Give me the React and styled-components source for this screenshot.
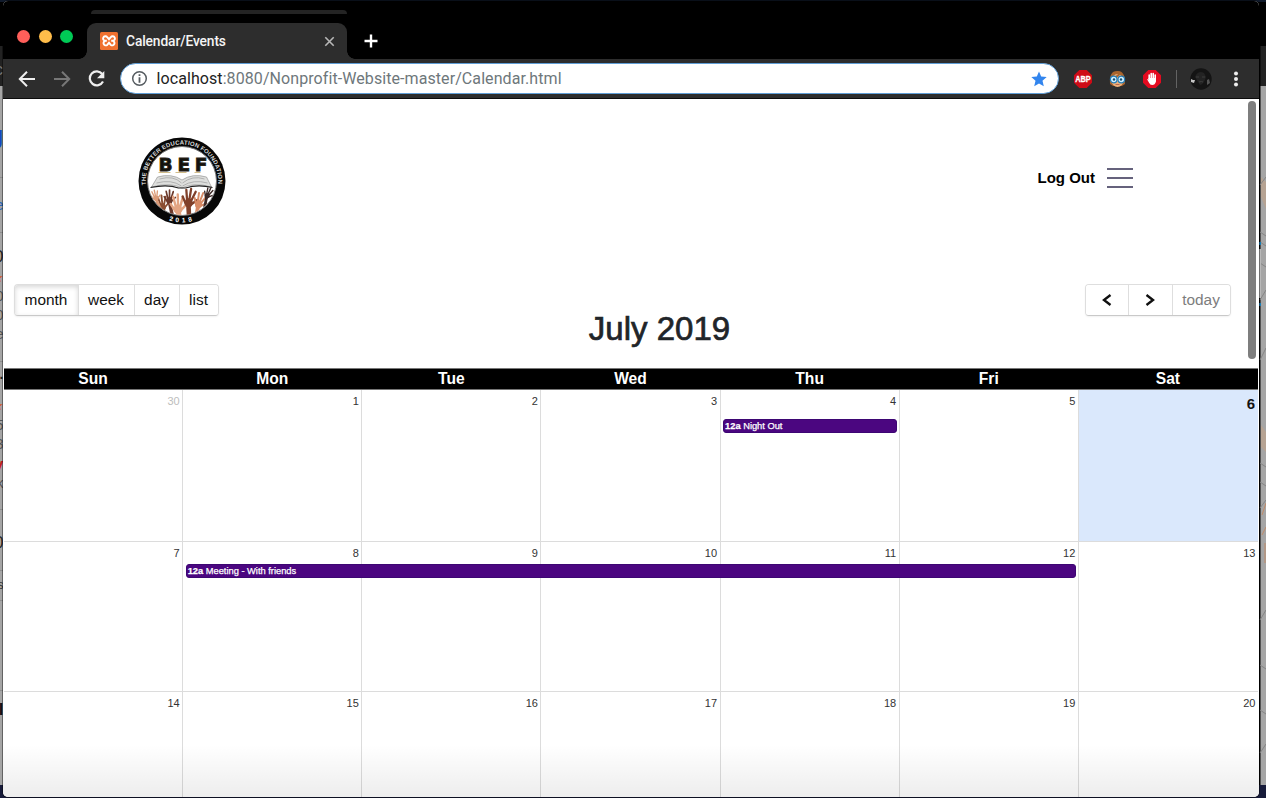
import React from "react";
import styled, { createGlobalStyle } from "styled-components";

const Global = createGlobalStyle`
  * { box-sizing: border-box; }
  html, body { margin: 0; padding: 0; overflow: hidden; }
  body { font-family: "Liberation Sans", Arial, sans-serif; background: #000; }
  h2 { margin: 0; }
`;

const Desktop = styled.div`
  position: relative;
  width: 1266px;
  height: 798px;
  overflow: hidden;
  padding: 1px 7px 1px 3px;
  background: linear-gradient(#101a2b 0 2px, #000 2px 46px, #222 46px 86px, #a5a5a5 86px 785px, #171b3a 785px);
`;

const Backdrop = styled.svg`
  position: absolute;
  top: 0;
  left: 0;
`;

const Window = styled.div`
  position: relative;
  display: flex;
  flex-direction: column;
  width: 1256px;
  height: 796px;
  background: #fff;
  border-radius: 5px;
  overflow: hidden;
  box-shadow: 0 0 0 1px rgba(0, 0, 0, 0.4);
`;

const TabStrip = styled.div`
  flex: none;
  display: flex;
  align-items: flex-end;
  height: 58px;
  background: #000;
`;

const Lights = styled.div`
  display: flex;
  gap: 8.5px;
  width: 84px;
  height: 36px;
  padding: 7px 0 0 14.3px;
`;

const Light = styled.span`
  width: 13px;
  height: 13px;
  border-radius: 50%;
  background: ${(p) => p.$color};
`;

const TabColumn = styled.div`
  display: flex;
  flex-direction: column;
  width: 260px;
`;

const TabGhost = styled.div`
  height: 4px;
  margin: 0 0 9px 4px;
  width: 256px;
  background: #242424;
  border-radius: 8px 8px 0 0;
`;

const Tab = styled.div`
  position: relative;
  display: flex;
  align-items: center;
  height: 36px;
  padding: 0 11px 0 13px;
  background: #2d2d2d;
  border-radius: 9px 9px 0 0;
  &::before, &::after {
    content: "";
    position: absolute;
    bottom: 0;
    width: 8px;
    height: 8px;
  }
  &::before { left: -8px; background: radial-gradient(circle at 0 0, transparent 7.5px, #2d2d2d 8px); }
  &::after { right: -8px; background: radial-gradient(circle at 100% 0, transparent 7.5px, #2d2d2d 8px); }
`;

const TabTitle = styled.span`
  flex: 1;
  margin-left: 8px;
  padding-bottom: 1px;
  font: 500 13.8px/18px Roboto, sans-serif;
  letter-spacing: -0.12px;
  color: #f4f4f4;
`;

const NewTab = styled.div`
  display: flex;
  align-items: center;
  height: 36px;
  padding-left: 16.500px;
`;

const Toolbar = styled.div`
  flex: none;
  display: flex;
  align-items: center;
  height: 40px;
  background: #2d2d2d;
  border-bottom: 1px solid #0c0c0c;
`;

const NavIcons = styled.div`
  display: flex;
  align-items: center;
  gap: 15px;
  width: 116.500px;
  padding-left: 13.500px;
`;

const Address = styled.div`
  display: flex;
  align-items: center;
  width: 939px;
  height: 31px;
  padding: 0 11px 0 10px;
  background: #fff;
  border: 1.5px solid #609ed6;
  border-radius: 16px;
`;

const Url = styled.span`
  flex: 1;
  margin-left: 9px;
  font: 400 16px/20px Roboto, sans-serif;
  letter-spacing: 0.08px;
  color: #6e777b;
  white-space: nowrap;
`;

const Host = styled.span`
  color: #222;
`;

const Extensions = styled.div`
  display: flex;
  align-items: center;
  padding-left: 15px;
`;

const ExtIcon = styled.svg`
  flex: none;
  display: block;
  margin-right: ${(p) => p.$gap}px;
`;

const Divider = styled.span`
  width: 1px;
  height: 18px;
  margin-right: 13px;
  background: #636363;
`;

const Page = styled.main`
  position: relative;
  flex: 1;
  display: flex;
  flex-direction: column;
  min-height: 0;
  padding: 0 1px;
  background: #fff;
`;

const ScrollThumb = styled.div`
  position: absolute;
  top: 2px;
  right: 3px;
  width: 8px;
  height: 258px;
  border-radius: 4px;
  background: #7e7e7e;
`;

const BottomShade = styled.div`
  position: absolute;
  inset: auto 0 0 0;
  height: 52px;
  background: linear-gradient(rgba(0, 0, 0, 0), rgba(0, 0, 0, 0.07));
`;

const SiteHeader = styled.header`
  flex: none;
  display: flex;
  justify-content: space-between;
  height: 185px;
  padding: 37px 125px 0 133px;
`;

const Account = styled.div`
  display: flex;
  align-items: center;
  height: 83px;
  gap: 12px;
  font-size: 15px;
  font-weight: 700;
  color: #000;
`;

const Menu = styled.div`
  display: flex;
  flex-direction: column;
  justify-content: space-between;
  width: 26px;
  height: 20px;
`;

const MenuLine = styled.span`
  height: 2px;
  background: #65627c;
`;

const Controls = styled.div`
  flex: none;
  display: grid;
  grid-template-columns: 1fr auto 1fr;
  height: 84px;
  padding: 0 27px 0 10px;
`;

const ButtonGroup = styled.div`
  display: flex;
  justify-self: ${(p) => p.$side};
  height: 32px;
  border: 1px solid #dedede;
  border-bottom-color: #c9c9c9;
  border-radius: 4px;
  overflow: hidden;
  box-shadow: 0 1px 2px rgba(0, 0, 0, 0.06);
`;

const Button = styled.button`
  display: flex;
  align-items: center;
  justify-content: center;
  width: ${(p) => p.$width}px;
  height: 30px;
  padding: 0 1px 0 0;
  border: 0;
  border-left: ${(p) => (p.$first ? "0" : "1px solid #dedede")};
  background: #fff;
  color: ${(p) => (p.$muted ? "#7d7d7d" : "#111")};
  font: 400 15.4px "Liberation Sans", Arial, sans-serif;
  box-shadow: ${(p) => (p.$active ? "inset 0 2px 5px rgba(0,0,0,.16)" : "none")};
`;

const Title = styled.h2`
  padding-top: 26px;
  margin-left: 74px;
  font-size: 33px;
  line-height: 38px;
  font-weight: 400;
  color: #212529;
  -webkit-text-stroke: 0.7px #212529;
`;

const WeekdayBar = styled.div`
  flex: none;
  display: grid;
  grid-template-columns: repeat(7, 1fr);
  height: 22px;
  background: #000;
  border: 1px solid #777;
  border-width: 1px 0;
`;

const Weekday = styled.div`
  padding-right: 1px;
  text-align: center;
  font-size: 15.6px;
  line-height: 20px;
  font-weight: 700;
  color: #fff;
`;

const Week = styled.div`
  flex: none;
  display: grid;
  grid-template-columns: repeat(7, minmax(0, 1fr));
  grid-template-rows: ${(p) => p.$offset}px 14px 1fr;
  height: ${(p) => p.$height}px;
  border-bottom: 1px solid #dcdcdc;
`;

const Day = styled.div`
  grid-column: ${(p) => p.$col};
  grid-row: 1 / -1;
  padding: ${(p) => (p.$today ? "5px 3px" : "4px 2.5px")};
  border-right: ${(p) => (p.$col === 7 ? "0" : "1px solid #dcdcdc")};
  background: ${(p) => (p.$today ? "#dae8fc" : "transparent")};
  text-align: right;
  font-size: ${(p) => (p.$today ? 15 : 11)}px;
  line-height: ${(p) => (p.$today ? 18 : 14)}px;
  font-weight: ${(p) => (p.$today ? 700 : 400)};
  color: ${(p) => (p.$other ? "#bdbdbd" : p.$today ? "#111" : "#333")};
`;

const Event = styled.div`
  grid-column: ${(p) => p.$from} / ${(p) => p.$to};
  grid-row: 2;
  margin: 0 3px 0 2.5px;
  padding: 0 1px;
  border-radius: 3px;
  background: #4b0680;
  border: 1px solid #3d0673;
  color: #fff;
  font-size: 9.3px;
  line-height: 12px;
  white-space: nowrap;
  -webkit-text-stroke: 0.25px #fff;
`;

const WEEKDAYS = ["Sun", "Mon", "Tue", "Wed", "Thu", "Fri", "Sat"];
const WEEKS = [
  { days: [30, 1, 2, 3, 4, 5, 6], height: 152, offset: 29, event: { from: 5, to: 6, title: "Night Out" } },
  { days: [7, 8, 9, 10, 11, 12, 13], height: 150, offset: 21.5, event: { from: 2, to: 7, title: "Meeting - With friends" } },
  { days: [14, 15, 16, 17, 18, 19, 20], height: 150, offset: 22 },
];

const LEFT_BITS = [
  ["g", 144, "#1646c4", 26, 700], ["e", 210, "#2867b8", 15, 400], ["0", 262, "#222", 17, 400],
  ["★", 282, "#cf5a24", 13, 400], ["0", 301, "#555", 14, 400], ["0", 320, "#555", 14, 400],
  ["e", 339, "#555", 14, 400], [".", 379, "#222", 14, 700], ["★", 410, "#cf5a24", 13, 400],
  ["5", 430, "#555", 14, 400], ["3", 449, "#555", 14, 400], ["y", 470, "#c62222", 17, 700],
  ["k", 488, "#555", 14, 400], ["0", 548, "#222", 16, 400], ["s", 589, "#333", 12, 400], ["l", 715, "#111", 17, 700],
];

function DesktopBackdrop() {
  return (
    <Backdrop width="1266" height="798">
      <g>
        {LEFT_BITS.map(([ch, y, fill, size, weight]) => (
          <text key={y} x="3.500" y={y} fill={fill} fontSize={size} fontWeight={weight} textAnchor="end">{ch}</text>
        ))}
        <text x="3" y="75" fill="#777" fontSize="17" textAnchor="end">c</text>
        <path d="M0 177.500h3M0 232.500h3M0 361.500h3M0 509.500h3M0 570.500h3M0 600.500h3M0 690.500h3" stroke="#8e8e8e" />
      </g>
      <path d="M1259 46v739" stroke="#000" strokeWidth="3" />
      <path d="M1261 177v20l5 12v-27zM1261 425v22l5 5v-20z" fill="#b6a393" />
      <path d="M1260 185l6-8M1260 232l6 4M1260 242l6 4M1260 263l6 4M1260 300l6-10M1260 360l6-12M1260 463l6 4M1260 482l6 4M1260 508l6-8M1260 620l6-10M1260 665l6 4M1260 710l6 4M1260 753l6-9" stroke="#858585" fill="none" />
      <path d="M1262 515l4-12M1262 535l4-8M1265 543v20" stroke="#c08b69" fill="none" />
      <path d="M1260 249v49" stroke="#b9b9b9" strokeWidth="2" />
      <path d="M1260 242v3M1260 303v3" stroke="#177cb5" strokeWidth="2" />
    </Backdrop>
  );
}

function Logo() {
  const arms = [
    [164, 213, 1.1, -12, "#8b4e32"], [157, 205, 0.8, -18, "#dc9b78"], [171, 207, 1, -6, "#6c392b"], [180, 215, 1.4, -8, "#e3a482"],
    [191, 209, 1.35, 3, "#80402a"], [201, 211, 1.15, 15, "#d78b66"], [209, 203, 0.8, 18, "#3c2825"],
  ];
  return (
    <svg width="90" height="90" viewBox="137.500 136 90 90">
      <defs>
        <path id="ringTop" d="M146.700 186A36.200 36.200 0 1 1 218.300 186" />
        <path id="ringBottom" d="M157 213.700A41.500 41.500 0 0 0 208 213.700" />
        <clipPath id="face"><circle cx="182.500" cy="181" r="34" /></clipPath>
        <g id="hand">
          <path d="M0 16L-1.500 2" stroke="currentColor" strokeWidth="3.400" fill="none" />
          <path d="M-3.500 2L-6-3M-2.500 0L-3.500-8M-1 0L0-9M0 1L3.500-7M0 3L5-1" stroke="currentColor" strokeWidth="1.700" strokeLinecap="round" fill="none" />
          <ellipse cx="-1.300" cy="1.500" rx="3" ry="3.500" fill="currentColor" />
        </g>
      </defs>
      <circle cx="182.500" cy="181" r="43.500" fill="#070707" />
      <circle cx="182.500" cy="181" r="34.500" fill="#fff" stroke="#777" strokeWidth="1" />
      <text fill="#dcdcdc" fontSize="6" fontWeight="700">
        <textPath href="#ringTop" textLength="121" startOffset="1">THE BETTER EDUCATION FOUNDATION</textPath>
      </text>
      <text fill="#fff" fontSize="6.500" fontWeight="700">
        <textPath href="#ringBottom" startOffset="50%" textAnchor="middle" letterSpacing="3">2018</textPath>
      </text>
      <text x="159" y="171" textLength="49" fontSize="18.500" fontWeight="700" fontFamily="DejaVu Sans, sans-serif" fill="#111" stroke="#2b2413" strokeWidth="0.900">BEF</text>
      <path d="M159 172.500h12M176 172.500h11M195 172.500h6" stroke="#bda158" strokeWidth="0.700" />
      <path d="M158 177Q172 173 182.500 180Q193 173 207 177L212 187Q194 182 182.500 188Q171 182 152 187Z" fill="#dedfdd" stroke="#888" strokeWidth="0.600" />
      <path d="M160 179Q174 175 182 183M157 183Q172 179 182 186M205 179Q193 175 183 183M208 183Q194 179 183 186" stroke="#aaa" fill="none" strokeWidth="0.900" />
      <path d="M151 187.500Q168 184 179 188H186Q198 184 213 187.500" stroke="#222" strokeWidth="1.200" fill="none" />
      <g clipPath="url(#face)">
        {arms.map(([x, y, scale, angle, color]) => (
          <use key={x} href="#hand" transform={`translate(${x} ${y - 8}) rotate(${angle}) scale(${scale})`} color={color} />
        ))}
      </g>
    </svg>
  );
}

function BrowserChrome() {
  return (
    <>
      <TabStrip>
        <Lights>
          <Light $color="#ff5f5a" /><Light $color="#ffbd4a" /><Light $color="#00ca56" />
        </Lights>
        <TabColumn>
          <TabGhost />
          <Tab>
            <svg width="18" height="18" viewBox="0 0 18 18">
              <rect width="18" height="18" rx="1.500" fill="#f0712f" />
              <path d="M5.500 8.800A2.300 2.300 0 1 1 7.200 5.100L9 7.200l1.800-2.100A2.300 2.300 0 1 1 12.500 8.800H11.200M5.500 8.800H6.800M5.500 8.800A2.300 2.300 0 1 0 7.200 12.900L9 10.800l1.800 2.100A2.300 2.300 0 1 0 12.500 8.800" fill="none" stroke="#fff" strokeWidth="1.900" />
            </svg>
            <TabTitle>Calendar/Events</TabTitle>
            <svg width="13" height="13" viewBox="0 0 13 13"><path d="M2.300 2.300l8.400 8.400M10.700 2.300l-8.400 8.400" stroke="#b8b8b8" strokeWidth="1.600" /></svg>
          </Tab>
        </TabColumn>
        <NewTab>
          <svg width="14" height="14" viewBox="0 0 14 14"><path d="M7 .5v13M.5 7h13" stroke="#fff" strokeWidth="2.400" /></svg>
        </NewTab>
      </TabStrip>
      <Toolbar>
        <NavIcons>
          <svg width="20" height="20" viewBox="0 0 20 20"><path d="M18 10H3M10 2.800L2.800 10l7.200 7.200" fill="none" stroke="#eee" strokeWidth="2" /></svg>
          <svg width="20" height="20" viewBox="0 0 20 20"><path d="M2 10h15M10 2.800l7.200 7.200-7.200 7.200" fill="none" stroke="#777" strokeWidth="2" /></svg>
          <svg width="19" height="20" viewBox="0 0 19 20"><path d="M15.300 5A7 7 0 1 0 16 12.500" fill="none" stroke="#eee" strokeWidth="2.200" /><path d="M17.300 2v7.300H10z" fill="#eee" /></svg>
        </NavIcons>
        <Address>
          <svg width="17" height="17" viewBox="0 0 17 17"><circle cx="8.500" cy="8.500" r="6.800" fill="none" stroke="#555b60" strokeWidth="1.500" /><path d="M8.500 4.200v1.900M8.500 7.300v5.500" stroke="#555b60" strokeWidth="1.800" /></svg>
          <Url><Host>localhost</Host>:8080/Nonprofit-Website-master/Calendar.html</Url>
          <svg width="16" height="16" viewBox="0 0 16 16"><path d="M8 .5l2.200 5.100 5.500.5-4.200 3.700 1.300 5.500L8 12.400l-4.800 2.900 1.300-5.500L.3 6.100l5.500-.5z" fill="#3285ee" /></svg>
        </Address>
        <Extensions>
          <ExtIcon $gap={17} width="18" height="18" viewBox="0 0 18 18">
            <path d="M5.300 0h7.400L18 5.300v7.400L12.700 18H5.300L0 12.700V5.300z" fill="#cf0b16" />
            <text x="1.200" y="12.200" fontSize="9" fontWeight="700" fill="#fff" stroke="#fff" strokeWidth="0.300" textLength="15.600" lengthAdjust="spacingAndGlyphs">ABP</text>
          </ExtIcon>
          <ExtIcon $gap={17} width="17" height="18" viewBox="0 0 17 18">
            <path d="M1 14Q0 1 8 1Q16 0 16 14L13 16H4z" fill="#a9642c" />
            <ellipse cx="8.500" cy="10.500" rx="6" ry="6.500" fill="#eeb17a" />
            <path d="M2 8Q8 8 11 3Q14 5 15 8" stroke="#a9642c" strokeWidth="2" fill="none" />
            <circle cx="4.700" cy="9.500" r="3.300" fill="#cfefff" stroke="#237eba" strokeWidth="1.200" />
            <circle cx="12.300" cy="9.500" r="3.300" fill="#cfefff" stroke="#237eba" strokeWidth="1.200" />
            <circle cx="5" cy="9.500" r="1.200" fill="#1d506d" /><circle cx="12" cy="9.500" r="1.200" fill="#1d506d" />
            <path d="M6.500 14.500h4" stroke="#b96851" />
          </ExtIcon>
          <ExtIcon $gap={15} width="18" height="18" viewBox="0 0 18 18">
            <path d="M5.300 0h7.400L18 5.300v7.400L12.700 18H5.300L0 12.700V5.300z" fill="#e40b20" />
            <path d="M6.200 9V5M8.200 9V3.500M10.200 9V3.500M12.200 10V5" stroke="#fff" strokeWidth="1.600" strokeLinecap="round" />
            <path d="M5.400 8h7.600v3.500Q12 15 9.200 15Q7 15 5.900 12.500L4.200 9.500Q4.700 8.500 5.700 10z" fill="#fff" />
          </ExtIcon>
          <Divider />
          <ExtIcon $gap={21} width="22" height="22" viewBox="0 0 22 22">
            <circle cx="11" cy="11" r="10.700" fill="#141414" />
            <path d="M5 9Q8 2 14 5L16 9Q14 16 10 17z" fill="#232323" />
            <path d="M1 11l2 1 2 0-1 3-3-1z" fill="#c5c5c5" />
            <path d="M6 9l3 0M12 9l3 0M9 14q3-1 4 0" stroke="#3c3c3c" fill="none" />
            <path d="M17 12l2-1 1 4-3 2z" fill="#555" />
          </ExtIcon>
          <svg width="6" height="16" viewBox="0 0 6 16"><g fill="#eee"><circle cx="3" cy="2.500" r="2" /><circle cx="3" cy="8" r="2" /><circle cx="3" cy="13.500" r="2" /></g></svg>
        </Extensions>
      </Toolbar>
    </>
  );
}

function CalendarWeek({ week }) {
  return (
    <Week $height={week.height} $offset={week.offset}>
      {week.days.map((n, i) => (
        <Day key={n} $col={i + 1} $today={n === 6} $other={n === 30}>{n}</Day>
      ))}
      {week.event && (
        <Event $from={week.event.from} $to={week.event.to}><b>12a</b> {week.event.title}</Event>
      )}
    </Week>
  );
}

export default function App() {
  return (
    <>
      <Global />
      <Desktop>
        <DesktopBackdrop />
        <Window>
          <BrowserChrome />
          <Page>
            <SiteHeader>
              <Logo />
              <Account>
                Log Out
                <Menu><MenuLine /><MenuLine /><MenuLine /></Menu>
              </Account>
            </SiteHeader>
            <Controls>
              <ButtonGroup $side="start">
                <Button $width={63} $first $active>month</Button>
                <Button $width={56}>week</Button>
                <Button $width={45}>day</Button>
                <Button $width={39}>list</Button>
              </ButtonGroup>
              <Title>July 2019</Title>
              <ButtonGroup $side="end">
                <Button $width={42} $first aria-label="Previous">
                  <svg width="10" height="12" viewBox="0 0 10 12"><path d="M8.500 1L2 6l6.500 5" fill="none" stroke="#111" strokeWidth="2.400" /></svg>
                </Button>
                <Button $width={44} aria-label="Next">
                  <svg width="10" height="12" viewBox="0 0 10 12"><path d="M1.500 1L8 6l-6.500 5" fill="none" stroke="#111" strokeWidth="2.400" /></svg>
                </Button>
                <Button $width={58} $muted>today</Button>
              </ButtonGroup>
            </Controls>
            <WeekdayBar>{WEEKDAYS.map((d) => <Weekday key={d}>{d}</Weekday>)}</WeekdayBar>
            {WEEKS.map((w) => <CalendarWeek key={w.days[0]} week={w} />)}
            <ScrollThumb />
            <BottomShade />
          </Page>
        </Window>
      </Desktop>
    </>
  );
}
